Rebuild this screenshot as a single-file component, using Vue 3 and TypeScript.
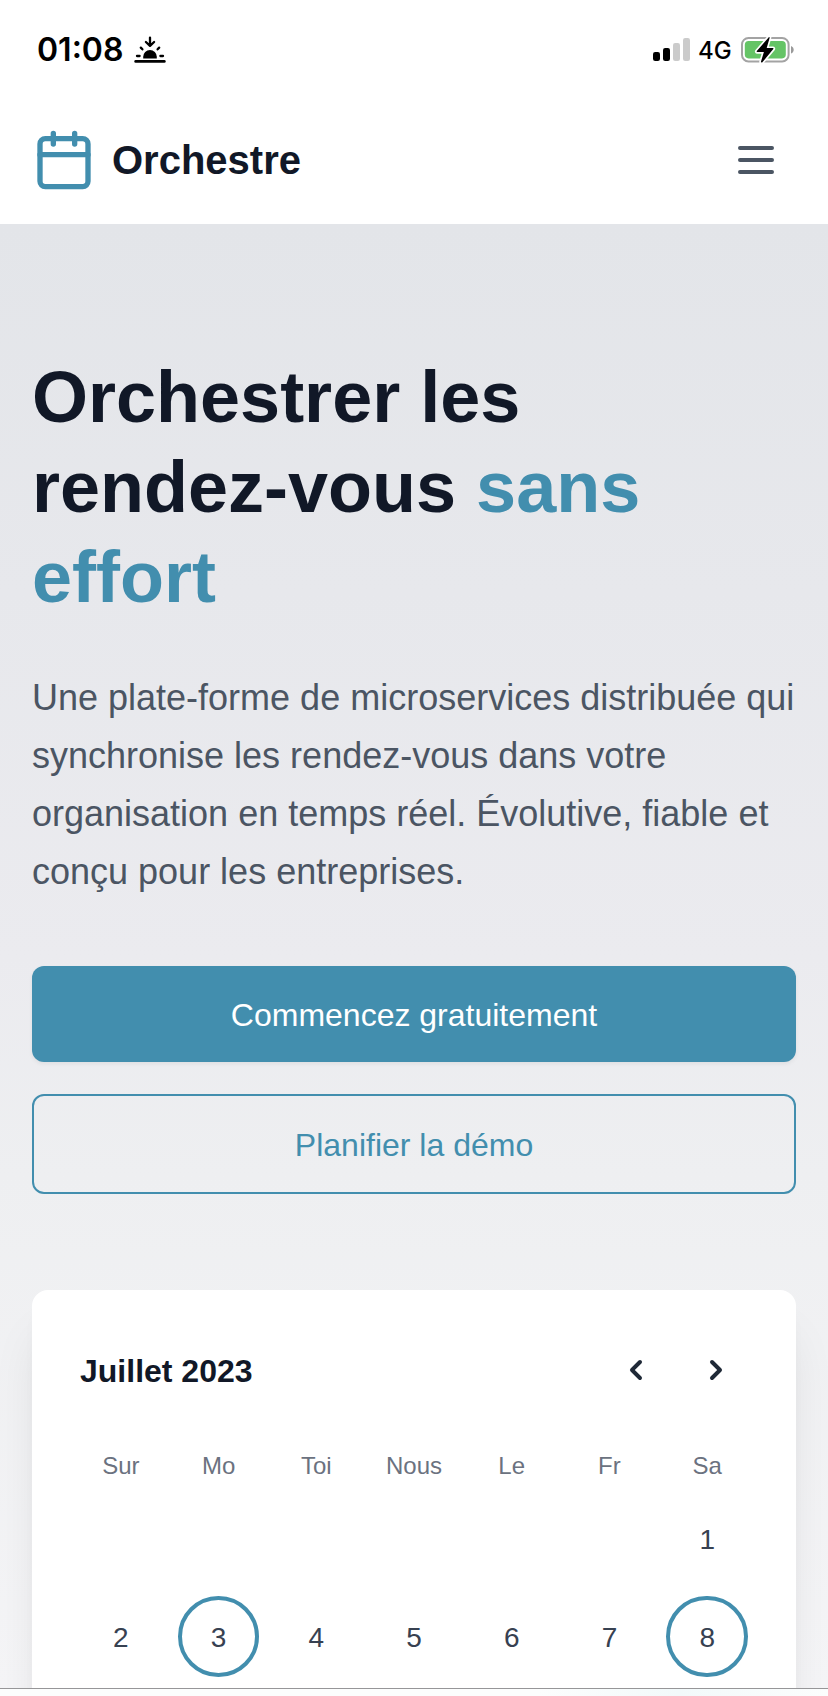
<script setup lang="ts">
interface Day {
  label: number
  marked?: boolean
}

const weekdays: string[] = ['Sur', 'Mo', 'Toi', 'Nous', 'Le', 'Fr', 'Sa']
const leadingBlanks = 6
const days: Day[] = [
  { label: 1 },
  { label: 2 },
  { label: 3, marked: true },
  { label: 4 },
  { label: 5 },
  { label: 6 },
  { label: 7 },
  { label: 8, marked: true },
]
</script>

<template>
  <div class="screen">
    <div class="status">
      <div class="status-left">
        <span class="time">01:08</span>
        <svg class="sunset" viewBox="0 0 32 28" width="32" height="28">
          <g fill="none" stroke="#000" stroke-width="2.3" stroke-linecap="round" stroke-linejoin="round">
            <path d="M16 2.6v8M11.9 7l4.1 3.9L20.1 7" />
            <path d="M6.8 12.6l1.6 1.7M25.2 12.6l-1.6 1.7M3 21h2.6M26.4 21h2.6" />
            <path d="M1.6 26.4h28.8" stroke-width="2.6" />
          </g>
          <path d="M9.2 23.4v-1.6a6.8 6.8 0 0 1 13.6 0v1.6z" />
        </svg>
      </div>
      <div class="status-right">
        <svg viewBox="0 0 38 24" width="38" height="24">
          <rect x="0" y="14" width="7" height="9" rx="2.2" />
          <rect x="10" y="10" width="7" height="13" rx="2.2" />
          <rect x="20" y="5" width="7" height="18" rx="2.2" fill="#cbcbcb" />
          <rect x="30" y="0" width="7" height="23" rx="2.2" fill="#cbcbcb" />
        </svg>
        <span class="network">4G</span>
        <svg class="battery" viewBox="0 0 54 28" width="54" height="28">
          <rect x="1" y="2" width="46.6" height="23.4" rx="6.5" fill="none" stroke="#a3a3a3" stroke-width="2" />
          <path d="M50 10c3.6 1.4 3.6 6.2 0 7.6z" fill="#9a9a9a" />
          <rect x="3.8" y="5" width="41" height="17.4" rx="3.8" fill="#65c466" />
          <path
            d="M27.8 1.2L15.8 15.1c-.4.5-.2 1 .5 1h6.6L20 25.5c-.3 1 .7 1.5 1.4.7L32.3 13.1c.4-.5.2-1-.5-1h-6.1l2.9-10.2c.2-.8-.4-1.1-.8-.7z"
            stroke="#fff" stroke-width="3.4" paint-order="stroke"
          />
        </svg>
      </div>
    </div>

    <header class="nav">
      <div class="brand">
        <svg viewBox="0 0 24 24" width="64" height="64" fill="none" stroke="#428eae" stroke-width="2" stroke-linecap="round" stroke-linejoin="round">
          <rect x="3" y="4" width="18" height="18" rx="2" />
          <path d="M16 2v4M8 2v4M3 10h18" />
        </svg>
        <span class="brand-name">Orchestre</span>
      </div>
      <button class="menu" type="button" aria-label="Menu">
        <svg viewBox="0 0 24 24" width="48" height="48" fill="none" stroke="#4b5563" stroke-width="2" stroke-linecap="round">
          <path d="M4 6h16M4 12h16M4 18h16" />
        </svg>
      </button>
    </header>

    <main class="hero">
      <h1>Orchestrer les<br />rendez-vous <span class="accent">sans<br />effort</span></h1>
      <p class="lead">
        Une plate-forme de microservices distribuée qui<br />
        synchronise les rendez-vous dans votre<br />
        organisation en temps réel. Évolutive, fiable et<br />
        conçu pour les entreprises.
      </p>
      <div class="actions">
        <button class="btn primary" type="button">Commencez gratuitement</button>
        <button class="btn outline" type="button">Planifier la démo</button>
      </div>

      <section class="card">
        <div class="card-head">
          <h2>Juillet 2023</h2>
          <div class="pager">
            <button type="button" aria-label="Mois précédent">
              <svg viewBox="0 0 20 20" width="40" height="40" fill="#1f2937">
                <path d="M12.707 5.293a1 1 0 010 1.414L9.414 10l3.293 3.293a1 1 0 01-1.414 1.414l-4-4a1 1 0 010-1.414l4-4a1 1 0 011.414 0z" />
              </svg>
            </button>
            <button type="button" aria-label="Mois suivant">
              <svg viewBox="0 0 20 20" width="40" height="40" fill="#1f2937">
                <path d="M7.293 14.707a1 1 0 010-1.414L10.586 10 7.293 6.707a1 1 0 011.414-1.414l4 4a1 1 0 010 1.414l-4 4a1 1 0 01-1.414 0z" />
              </svg>
            </button>
          </div>
        </div>
        <div class="grid weekdays">
          <span v-for="name in weekdays" :key="name">{{ name }}</span>
        </div>
        <div class="grid days">
          <span v-for="n in leadingBlanks" :key="'blank' + n" class="day"></span>
          <span v-for="day in days" :key="day.label" class="day" :class="{ marked: day.marked }">{{ day.label }}</span>
        </div>
      </section>
    </main>

    <footer class="toolbar"></footer>
  </div>
</template>

<style>
body {
  margin: 0;
  overflow: hidden;
}
</style>

<style scoped>
.screen {
  width: 828px;
  height: 1696px;
  display: flex;
  flex-direction: column;
  overflow: hidden;
  background: #fff;
  font-family: "Liberation Sans", Arial, sans-serif;
  color: #111827;
}
.screen * {
  box-sizing: border-box;
}
svg {
  display: block;
  flex: none;
}
button {
  font: inherit;
  border: 0;
  padding: 0;
  margin: 0;
  background: none;
  color: inherit;
}
.status {
  flex: none;
  height: 96px;
  display: flex;
  justify-content: space-between;
  padding: 0 33px 0 37px;
  font-family: Inter, sans-serif;
  color: #000;
}
.status-left,
.status-right {
  display: flex;
  align-items: flex-start;
}
.time {
  width: 97px;
  padding-top: 30px;
  font-size: 32px;
  line-height: 40px;
  font-weight: 600;
  white-space: nowrap;
}
.sunset {
  margin-top: 35px;
}
.status-right > svg {
  margin-top: 38px;
}
.network {
  width: 42px;
  margin-left: 7px;
  padding-top: 36px;
  font-size: 24px;
  line-height: 30px;
  font-weight: 500;
}
.status-right > .battery {
  margin-top: 36px;
  margin-left: 1px;
}
.nav {
  flex: none;
  height: 128px;
  display: flex;
  align-items: center;
  justify-content: space-between;
  padding: 0 48px 0 32px;
}
.brand {
  display: flex;
  align-items: center;
  gap: 16px;
}
.brand-name {
  font-size: 40px;
  line-height: 56px;
  font-weight: 700;
}
.hero {
  flex: none;
  height: 1464px;
  padding: 128px 32px 0;
  overflow: hidden;
  background: linear-gradient(#e3e5e9, #ebebef 50%, #eeeff1 65%, #f5f5f7);
}
h1 {
  margin: 0;
  font-size: 72px;
  line-height: 90px;
  font-weight: 700;
  font-variant-ligatures: none;
  white-space: nowrap;
}
.accent {
  color: #428eae;
}
.lead {
  margin: 47px 0 0;
  height: 233px;
  font-size: 36px;
  line-height: 58px;
  color: #4b5563;
  white-space: nowrap;
}
.actions {
  margin-top: 64px;
  display: flex;
  flex-direction: column;
  gap: 32px;
}
.btn {
  padding-top: 2px;
  border-radius: 12px;
  font-size: 32px;
}
.primary {
  height: 96px;
  background: #428eae;
  color: #fff;
  box-shadow: 0 2px 4px rgba(0, 0, 0, 0.06);
}
.outline {
  height: 100px;
  border: 2px solid #428eae;
  color: #428eae;
}
.card {
  height: 700px;
  margin-top: 96px;
  padding: 48px;
  border-radius: 16px;
  background: #fff;
  box-shadow: 0 40px 50px -10px rgba(0, 0, 0, 0.1), 0 16px 20px -12px rgba(0, 0, 0, 0.1);
}
.card-head {
  height: 64px;
  display: flex;
  align-items: center;
  justify-content: space-between;
}
h2 {
  margin: 2px 0 0;
  font-size: 32px;
  line-height: 48px;
  font-weight: 700;
}
.pager {
  display: flex;
  gap: 40px;
  margin-right: 12px;
}
.grid {
  display: grid;
  grid-template-columns: repeat(7, 1fr);
  column-gap: 16px;
  text-align: center;
}
.weekdays {
  margin-top: 46px;
  font-size: 24px;
  line-height: 36px;
  color: #6b7280;
}
.days {
  margin-top: 14px;
  row-gap: 16px;
  font-size: 28px;
  color: #374151;
}
.day {
  aspect-ratio: 1;
  display: flex;
  align-items: center;
  justify-content: center;
  padding-top: 2px;
  border: 4px solid transparent;
  border-radius: 50%;
}
.marked {
  border-color: #428eae;
}
.toolbar {
  flex: none;
  height: 8px;
  border-top: 1px solid #969698;
  background: linear-gradient(90deg, #fcfdfd 65%, #f2f9fa 82%, #fcfdfd);
}
</style>
